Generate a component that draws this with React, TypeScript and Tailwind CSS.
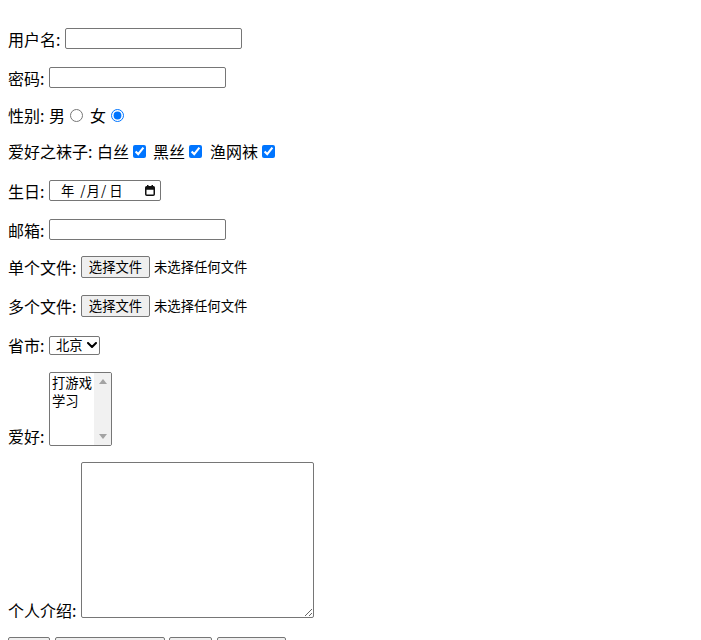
import React from "react";

const font = { fontFamily: '"Microsoft YaHei", "Noto Sans CJK SC", "Noto Sans", sans-serif' };

function CalendarIcon() {
  return (
    <svg width="10" height="11" viewBox="0 0 10 11" className="block">
      <rect x="0.75" y="1.75" width="8.5" height="8.5" rx="1" fill="none" stroke="#111" strokeWidth="1.5" />
      <rect x="0.75" y="1.75" width="8.5" height="3" fill="#111" />
      <rect x="2" y="0" width="1.5" height="2" fill="#111" />
      <rect x="6.5" y="0" width="1.5" height="2" fill="#111" />
    </svg>
  );
}

function Chevron() {
  return (
    <svg width="10" height="6" viewBox="0 0 10 6" className="block">
      <path d="M1 1 L5 5 L9 1" fill="none" stroke="#000" strokeWidth="2" strokeLinecap="round" strokeLinejoin="round" />
    </svg>
  );
}

export default function App() {
  return (
    <div className="min-h-screen bg-white text-black text-[16px]" style={font}>
      <div className="flex flex-col pl-[8px] pb-[20px]">
        {/* 用户名 */}
        <div className="flex items-center h-[25px] mt-[26px]">
          <span className="w-[57px] shrink-0 whitespace-nowrap">用户名:</span>
          <input type="text" className="w-[177px] h-[21px] border border-[#767676] rounded-[2px] px-[2px] text-[13.33px] bg-white" />
        </div>
        {/* 密码 */}
        <div className="flex items-center h-[25px] mt-[14px]">
          <span className="w-[41px] shrink-0 whitespace-nowrap">密码:</span>
          <input type="password" className="w-[177px] h-[21px] border border-[#767676] rounded-[2px] px-[2px] text-[13.33px] bg-white" />
        </div>
        {/* 性别 */}
        <div className="flex items-center h-[24px] mt-[13px]">
          <span className="w-[41px] shrink-0 whitespace-nowrap">性别:</span>
          <span className="w-[16px] shrink-0">男</span>
          <input type="radio" name="sex" className="m-0 ml-[5px] w-[13px] h-[13px] shrink-0" />
          <span className="ml-[7px] w-[16px] shrink-0">女</span>
          <input type="radio" name="sex" defaultChecked className="m-0 ml-[5px] w-[13px] h-[13px] shrink-0" />
        </div>
        {/* 袜子 */}
        <div className="flex items-center h-[24px] mt-[12px]">
          <span className="w-[89px] shrink-0 whitespace-nowrap">爱好之袜子:</span>
          <span className="w-[32px] shrink-0 whitespace-nowrap">白丝</span>
          <input type="checkbox" defaultChecked className="m-0 ml-[4px] w-[13px] h-[13px] shrink-0" />
          <span className="ml-[7px] w-[32px] shrink-0 whitespace-nowrap">黑丝</span>
          <input type="checkbox" defaultChecked className="m-0 ml-[4px] w-[13px] h-[13px] shrink-0" />
          <span className="ml-[8px] w-[48px] shrink-0 whitespace-nowrap">渔网袜</span>
          <input type="checkbox" defaultChecked className="m-0 ml-[4px] w-[13px] h-[13px] shrink-0" />
        </div>
        {/* 生日 */}
        <div className="flex items-center h-[25px] mt-[15px]">
          <span className="w-[41px] shrink-0 whitespace-nowrap">生日:</span>
          <div className="w-[112px] h-[21px] border border-[#767676] rounded-[2px] flex items-center text-[13.33px] leading-none shrink-0">
            <span className="ml-[11px]">年</span>
            <span className="ml-[6px]">/</span>
            <span className="ml-[1px]">月</span>
            <span className="ml-[1px]">/</span>
            <span className="ml-[3px]">日</span>
            <span className="ml-auto mr-[5px]"><CalendarIcon /></span>
          </div>
        </div>
        {/* 邮箱 */}
        <div className="flex items-center h-[25px] mt-[14px]">
          <span className="w-[41px] shrink-0 whitespace-nowrap">邮箱:</span>
          <input type="email" className="w-[177px] h-[21px] border border-[#767676] rounded-[2px] px-[2px] text-[13.33px] bg-white" />
        </div>
        {/* 单个文件 */}
        <div className="flex items-center h-[24px] mt-[13px]">
          <span className="w-[73px] shrink-0 whitespace-nowrap">单个文件:</span>
          <button type="button" className="w-[69px] h-[22px] border border-[#767676] rounded-[2px] bg-[#efefef] text-[13.33px] leading-none shrink-0">选择文件</button>
          <span className="ml-[4px] text-[13.33px] whitespace-nowrap">未选择任何文件</span>
        </div>
        {/* 多个文件 */}
        <div className="flex items-center h-[24px] mt-[15px]">
          <span className="w-[73px] shrink-0 whitespace-nowrap">多个文件:</span>
          <button type="button" className="w-[69px] h-[22px] border border-[#767676] rounded-[2px] bg-[#efefef] text-[13.33px] leading-none shrink-0">选择文件</button>
          <span className="ml-[4px] text-[13.33px] whitespace-nowrap">未选择任何文件</span>
        </div>
        {/* 省市 */}
        <div className="flex items-center h-[24px] mt-[15px]">
          <span className="w-[41px] shrink-0 whitespace-nowrap">省市:</span>
          <div className="w-[51px] h-[19px] border border-[#767676] rounded-[2px] flex items-center text-[13.33px] leading-none shrink-0">
            <span className="ml-[6px]">北京</span>
            <span className="ml-[4px]"><Chevron /></span>
          </div>
        </div>
        {/* 爱好 */}
        <div className="flex items-end h-[74px] mt-[15px]">
          <span className="w-[41px] shrink-0 whitespace-nowrap leading-[21px] mb-[-1px]">爱好:</span>
          <div className="w-[63px] h-[74px] border border-[#767676] rounded-[2px] flex shrink-0 overflow-hidden">
            <div className="flex-1 flex flex-col text-[13.33px] leading-[18px] pl-[2px] pt-[1px]">
              <span className="whitespace-nowrap">打游戏</span>
              <span className="whitespace-nowrap">学习</span>
            </div>
            <div className="w-[17px] h-full bg-[#f1f1f1] flex flex-col items-center justify-between py-[6px]">
              <svg width="8" height="5" viewBox="0 0 8 5" className="block"><path d="M0 5 L4 0 L8 5 Z" fill="#a3a3a3" /></svg>
              <svg width="8" height="5" viewBox="0 0 8 5" className="block"><path d="M0 0 L4 5 L8 0 Z" fill="#a3a3a3" /></svg>
            </div>
          </div>
        </div>
        {/* 个人介绍 */}
        <div className="flex items-end h-[156px] mt-[16px]">
          <span className="w-[73px] shrink-0 whitespace-nowrap leading-[21px] mb-[-3px]">个人介绍:</span>
          <textarea className="w-[233px] h-[156px] border border-[#767676] rounded-[2px] p-[2px] text-[13.33px] resize bg-white shrink-0" />
        </div>
        {/* buttons */}
        <div className="flex items-center mt-[19px] gap-[4px]">
          <button type="button" className="w-[42px] h-[22px] border border-[#767676] rounded-[2px] bg-[#efefef] text-[13.33px] leading-none shrink-0">提交</button>
          <button type="button" className="w-[110px] h-[22px] border border-[#767676] rounded-[2px] bg-[#efefef] text-[13.33px] leading-none shrink-0 ml-[1px]">普通按钮</button>
          <button type="button" className="w-[43px] h-[22px] border border-[#767676] rounded-[2px] bg-[#efefef] text-[13.33px] leading-none shrink-0">重置</button>
          <button type="button" className="w-[69px] h-[22px] border border-[#767676] rounded-[2px] bg-[#efefef] text-[13.33px] leading-none shrink-0 ml-[1px]">按钮</button>
        </div>
      </div>
    </div>
  );
}
